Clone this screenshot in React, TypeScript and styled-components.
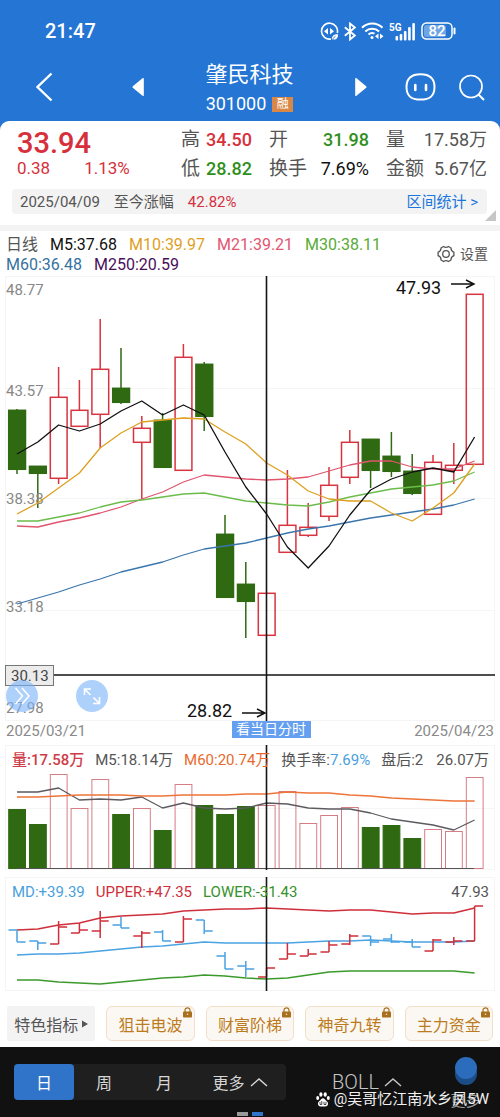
import React from "react";
import styled, { createGlobalStyle } from "styled-components";

const RED = "#d8343f";
const GREEN = "#2f6a12";
const FONT = 'Roboto, "Noto Sans CJK SC", sans-serif';

const GlobalStyle = createGlobalStyle`
  *, *::before, *::after { box-sizing: border-box; }
  body { margin: 0; background: #fff; font-family: ${FONT}; color: #555; }
  button { border: 0; padding: 0; margin: 0; background: none; font: inherit; color: inherit; cursor: pointer; }
  a { color: inherit; text-decoration: none; }
  svg { display: block; }
`;

/* ---------- header ---------- */

const Header = styled.header`
  background: #2475d4;
  color: #fff;
  padding-top: 18px;
`;

const StatusBar = styled.div`
  display: flex;
  align-items: center;
  justify-content: space-between;
  height: 26px;
  padding: 0 43px 0 45px;
`;

const Clock = styled.time`
  font-size: 20px;
  font-weight: 500;
  line-height: 26px;
`;

const StatusIcons = styled.div`
  display: flex;
  align-items: center;
  gap: 5px;
`;

const NavBar = styled.nav`
  display: grid;
  grid-template-columns: 108px 1fr 130px;
  align-items: center;
  padding: 16px 15px 4px 36px;
  height: 77px;
`;

const NavSide = styled.div`
  display: flex;
  align-items: center;
  justify-content: space-between;
  padding-bottom: 4px;
`;

const NavPair = styled.div`
  display: flex;
  align-items: center;
  gap: 23px;
`;

const IconButton = styled.button`
  display: block;
  color: #fff;
`;

const StockTitle = styled.div`
  display: flex;
  flex-direction: column;
  align-items: center;
`;

const StockName = styled.h1`
  margin: 0;
  font-size: 22px;
  font-weight: 400;
  line-height: 30px;
`;

const StockCode = styled.div`
  display: flex;
  align-items: center;
  gap: 6px;
  font-size: 18px;
  line-height: 28px;
`;

const Badge = styled.span`
  width: 21px;
  height: 15px;
  background: #d98747;
  font-size: 12px;
  line-height: 15px;
  text-align: center;
`;

const CardTop = styled.div`
  height: 9px;
  margin-bottom: -9px;
  background: #fff;
  border-radius: 9px 9px 0 0;
`;

/* ---------- quote ---------- */

const Quote = styled.section`
  position: relative;
  padding: 4px 13px 11px 12px;
`;

const QuoteGrid = styled.div`
  display: grid;
  grid-template-columns: 164px 1fr;
  padding: 0 0 2px 5px;
`;

const Price = styled.div`
  font-size: 29px;
  font-weight: 500;
  line-height: 36px;
  color: #d6303c;
`;

const Change = styled.div`
  display: flex;
  gap: 34px;
  font-size: 17px;
  line-height: 14px;
  color: #d6303c;
`;

const Stats = styled.dl`
  display: grid;
  grid-template-columns: 71px 100px 1fr;
  column-gap: 17px;
  margin: 0;
`;

const Stat = styled.div`
  display: flex;
  justify-content: space-between;
  font-size: 19px;
  line-height: 29px;
  white-space: nowrap;

  dt { color: #555; }
`;

const StatValue = styled.dd<{ $color: string; $bold?: boolean }>`
  margin: 0;
  font-size: 18px;
  font-weight: ${(p) => (p.$bold ? 500 : 400)};
  color: ${(p) => p.$color};
`;

const RangeBar = styled.div`
  display: flex;
  align-items: center;
  gap: 14px;
  height: 25px;
  margin-top: 4px;
  padding: 0 9px 0 8px;
  border-radius: 4px;
  background: #f3f3f3;
  font-size: 15px;
  line-height: 24px;

  a { margin-left: auto; color: #1a76dc; }
  strong { font-weight: 400; color: #d6303c; }
`;

const Corner = styled.span`
  position: absolute;
  right: 4px;
  bottom: 4px;
  border-style: solid;
  border-width: 0 0 11px 11px;
  border-color: transparent transparent #c6c6c6 transparent;
`;

const Divider = styled.div`
  height: 6px;
  background: #f3f3f3;
`;

/* ---------- moving average legend ---------- */

const LegendBar = styled.section`
  display: flex;
  align-items: center;
  justify-content: space-between;
  padding: 4px 12px 1px 6px;
`;

const Legend = styled.div`
  display: flex;
  flex-wrap: wrap;
  flex: 1;
  column-gap: 12px;
  font-size: 16px;
  line-height: 20px;
  padding-right: 20px;
`;

const Tint = styled.span<{ $color: string; $bold?: boolean }>`
  color: ${(p) => p.$color};
  font-weight: ${(p) => (p.$bold ? 500 : 400)};
  white-space: nowrap;
`;

const Settings = styled.button`
  display: flex;
  align-items: center;
  gap: 5px;
  padding-bottom: 2px;
  font-size: 14px;
  line-height: 20px;
`;

/* ---------- charts ---------- */

const ChartArea = styled.section`
  position: relative;
  padding: 0 5px;
`;

const Chart = styled.svg`
  width: 100%;
  height: auto;
  font-family: ${FONT};
`;

const FloatButton = styled.button<{ $left: number }>`
  position: absolute;
  left: ${(p) => p.$left}px;
  bottom: 9px;
  width: 32px;
  height: 32px;
  border-radius: 50%;
  background: rgba(120, 179, 250, 0.6);
`;

const DateRow = styled.div`
  display: grid;
  grid-template-columns: 1fr auto 1fr;
  align-items: center;
  height: 20px;
  margin-bottom: 4px;
  padding: 0 6px;
  font-size: 15px;
  line-height: 20px;
  color: #8a8a8a;
`;

const DayLink = styled.button`
  align-self: start;
  height: 17px;
  width: 79px;
  margin-left: 42px;
  background: #65a0f0;
  color: #fff;
  font-size: 14px;
  line-height: 17px;
`;

const DateCell = styled.div`
  &:last-child { text-align: right; }
`;

const Stack = styled.section<{ $gap: number }>`
  display: grid;
  grid-template-columns: minmax(0, 1fr);
  margin: 0 5px ${(p) => p.$gap}px;
  > * { grid-area: 1 / 1; }
`;

const PanelLegend = styled.div`
  display: flex;
  align-items: flex-start;
  gap: 11px;
  padding: 4px 6px 0 7px;
  font-size: 15px;
  line-height: 22px;
  white-space: nowrap;

  > :last-child { margin-left: auto; }
`;

/* ---------- indicators ---------- */

const ChipRow = styled.section`
  display: grid;
  grid-template-columns: repeat(5, 1fr);
  gap: 11px;
  padding: 15px 7px 6px;
`;

const Chip = styled.button<{ $plain?: boolean }>`
  position: relative;
  display: flex;
  align-items: center;
  justify-content: center;
  gap: 4px;
  height: 35px;
  border: 1px solid ${(p) => (p.$plain ? "#f3f3f3" : "#f1dfc8")};
  border-radius: ${(p) => (p.$plain ? 2 : 6)}px;
  background: ${(p) => (p.$plain ? "#f3f3f3" : "#fbf8f3")};
  color: ${(p) => (p.$plain ? "#555" : "#bd7b20")};
  font-size: 16px;
  white-space: nowrap;

  svg.lock { position: absolute; right: 2px; top: 0; }
`;

/* ---------- footer ---------- */

const Footer = styled.footer`
  position: relative;
  display: flex;
  align-items: flex-start;
  height: 70px;
  padding: 17px 11px 0 14px;
  background: #111;
  color: #ddd;
`;

const Tabs = styled.div`
  display: flex;
  height: 36px;
  border-radius: 4px;
  background: #1f1f1f;
`;

const Tab = styled.button<{ $active?: boolean; $wide?: boolean }>`
  display: flex;
  align-items: center;
  justify-content: center;
  gap: 5px;
  width: ${(p) => (p.$wide ? 92 : 60)}px;
  border-radius: 4px;
  background: ${(p) => (p.$active ? "#2f74c9" : "transparent")};
  color: ${(p) => (p.$active ? "#fff" : "#d6d6d6")};
  font-size: 16px;
`;

const Indicator = styled.button`
  display: flex;
  align-items: center;
  gap: 5px;
  height: 36px;
  margin-left: auto;
  color: #c4c4c4;
  font-size: 20px;
  font-weight: 300;
`;

const MoreButton = styled.button`
  display: flex;
  flex-direction: column;
  align-items: center;
  width: 47px;
  margin-left: 40px;
  margin-top: -9px;
  color: #999;
  font-size: 15px;
  line-height: 24px;
`;

const Watermark = styled.div`
  position: absolute;
  right: 11px;
  bottom: 7px;
  display: flex;
  align-items: center;
  gap: 4px;
  color: #f2f2f2;
  font-size: 15px;
  line-height: 22px;
  white-space: nowrap;
`;

const Pager = styled.div`
  position: absolute;
  left: 0;
  right: 0;
  bottom: 1px;
  display: flex;
  justify-content: center;
  gap: 4px;
`;

const PagerMark = styled.i<{ $color: string }>`
  width: 11px;
  height: 4px;
  background: ${(p) => p.$color};
`;

/* ---------- data ---------- */

const STEP = 20.8;
const px = (i: number) => 12 + i * STEP;
const line = (ys: number[]) => ys.map((y, i) => `${px(i).toFixed(1)},${y}`).join(" ");

/* rising?, body top, body bottom, wick top, wick bottom */
const candles: [boolean, number, number, number, number][] = [
  [false, 134, 193, 133, 198], [false, 190, 197, 190, 232], [true, 121, 202, 91, 208],
  [true, 134, 150, 104, 150], [true, 93, 138, 43, 172], [false, 112, 126, 72, 128],
  [true, 152, 166, 140, 223], [false, 144, 191, 137, 192], [true, 81, 194, 68, 194],
  [false, 88, 140, 86, 155], [false, 258, 321, 239, 321], [false, 308, 325, 286, 362],
  [true, 317, 359, 317, 359], [true, 249, 276, 194, 276], [true, 251, 259, 227, 261],
  [true, 209, 240, 191, 245], [true, 166, 201, 154, 208], [false, 163, 194, 163, 212],
  [false, 180, 195, 156, 201], [false, 195, 217, 178, 219], [true, 186, 238, 179, 238],
  [true, 189, 194, 167, 208], [true, 18, 188, 18, 188],
];

const averages = [
  { color: "#3a76ac", ys: [328, 322, 316, 309, 303, 296, 291, 286, 279, 273, 270, 267, 262, 257, 253, 250, 246, 242, 239, 236, 233, 229, 223] },
  { color: "#e0566f", ys: [250, 251, 246, 242, 237, 231, 223, 216, 206, 199, 201, 203, 204, 203, 201, 195, 189, 185, 185, 191, 193, 193, 185] },
  { color: "#6cbc4a", ys: [245, 245, 241, 237, 231, 226, 224, 221, 218, 217, 221, 225, 227, 229, 230, 226, 221, 217, 213, 211, 209, 205, 196] },
  { color: "#dda020", ys: [238, 227, 212, 197, 172, 157, 146, 144, 142, 143, 156, 168, 187, 199, 215, 223, 225, 225, 237, 245, 232, 217, 188] },
  { color: "#111", ys: [178, 166, 149, 155, 148, 135, 125, 139, 129, 139, 176, 211, 238, 271, 292, 270, 239, 214, 203, 196, 192, 196, 161] },
];

const volumes = [64, 79, 29, 63, 34, 69, 63, 85, 39, 60, 69, 61, 60, 46, 78, 70, 62, 82, 80, 93, 84, 86, 32];
const volumeLines = [
  { color: "#5d5a60", ys: [47, 47, 43, 55, 54, 55, 52, 63, 58, 63, 64, 63, 58, 59, 63, 64, 64, 68, 74, 77, 80, 85, 75] },
  { color: "#ee7439", ys: [52, 52, 51, 50, 50, 50, 51, 51, 50, 50, 50, 49, 49, 47, 48, 48, 50, 51, 53, 54, 55, 56, 56] },
];

const bands = [
  { color: "#4aa3e2", ys: [78, 77, 77, 76, 74, 72, 70, 69, 67, 65, 66, 66, 66, 66, 65, 64, 64, 63, 64, 65, 65, 65, 64] },
  { color: "#cf2f3b", ys: [53, 52, 48, 46, 41, 39, 38, 37, 34, 33, 32, 32, 31, 32, 33, 34, 33, 33, 35, 37, 36, 36, 31] },
  { color: "#3c9a2c", ys: [103, 103, 105, 106, 107, 105, 103, 101, 100, 98, 99, 101, 102, 101, 98, 95, 94, 94, 94, 94, 94, 94, 96] },
];

/* high, low, open, close */
const ticks: [number, number, number, number][] = [
  [53, 65, 53, 65], [64, 73, 64, 66], [44, 67, 67, 50], [46, 56, 56, 53], [34, 61, 54, 44], [40, 51, 48, 51],
  [54, 71, 59, 56], [53, 64, 55, 64], [39, 65, 65, 42], [43, 57, 43, 54], [75, 92, 79, 92], [84, 100, 89, 92],
  [91, 100, 100, 91], [66, 82, 82, 77], [72, 79, 79, 77], [64, 75, 75, 68], [57, 68, 67, 59], [59, 69, 59, 65],
  [57, 66, 62, 65], [62, 70, 65, 70], [62, 74, 74, 63], [60, 68, 65, 64], [29, 64, 64, 29],
];

const axis: [string, number][] = [["48.77", 19], ["43.57", 120], ["38.38", 228], ["33.18", 336], ["27.98", 437]];

/* ---------- pieces ---------- */

function Frame({ height, rows }: { height: number; rows: number[] }) {
  return (
    <g stroke="#f5f5f5" fill="none">
      <rect x="0.5" y="0.5" width="489" height={height - 1} />
      {rows.map((y) => <path key={y} d={`M0 ${y}.5H490`} />)}
    </g>
  );
}

function Lines({ items, width = 1.3 }: { items: { color: string; ys: number[] }[]; width?: number }) {
  return (
    <g fill="none" strokeWidth={width} strokeLinejoin="round">
      {items.map((l) => <polyline key={l.color} stroke={l.color} points={line(l.ys)} />)}
    </g>
  );
}

function PriceChart() {
  return (
    <Chart viewBox="0 0 490 445" role="img" aria-label="日线">
      <Frame height={445} rows={[112, 222, 334]} />
      {candles.map(([up, top, bottom, high, low], i) => (
        <g key={i} stroke={up ? RED : GREEN} strokeWidth="1.5" fill={up ? "none" : GREEN}>
          <path d={`M${px(i)} ${high}V${top}M${px(i)} ${bottom}V${low}`} />
          <rect x={px(i) - 8.3} y={top + 0.3} width="16.8" height={bottom - top} />
        </g>
      ))}
      <g fontSize="15" fill="#888">
        {axis.map(([label, y]) => <text key={label} x="1" y={y}>{label}</text>)}
      </g>
      <Lines items={averages} />
      <path d="M49 399H490M261.500 0V445" stroke="#151515" strokeWidth="1.6" />
      <rect x="0.5" y="389.5" width="48" height="20" fill="#ececec" stroke="#777" />
      <text x="6" y="405" fontSize="15" fill="#444">30.13</text>
      <g fontSize="18" fill="#111">
        <text x="391" y="18">47.93</text>
        <text x="182" y="441">28.82</text>
      </g>
      <path d="M446 8h23M461 4l8 4l-8 4M237 437h23M252 433l8 4l-8 4" fill="none" stroke="#111" strokeWidth="1.4" />
    </Chart>
  );
}

function VolumeChart() {
  return (
    <Chart viewBox="0 0 490 125" role="img" aria-label="成交量">
      <Frame height={125} rows={[63]} />
      {volumes.map((top, i) => {
        const up = candles[i][0];
        return (
          <rect key={i} x={px(i) - 8.3} y={top + 0.5} width="16.8" height={123 - top}
            fill={up ? "none" : GREEN} stroke={up ? "#d57d85" : GREEN} strokeWidth="1" />
        );
      })}
      <path d="M12 123.500H469" stroke="#555" />
      <Lines items={volumeLines} />
      <path d="M261.500 0V125" stroke="#151515" strokeWidth="1.6" />
    </Chart>
  );
}

function BandChart() {
  return (
    <Chart viewBox="0 0 490 114" role="img" aria-label="BOLL">
      <Frame height={114} rows={[]} />
      <Lines items={bands} width={1.5} />
      {ticks.map(([high, low, open, close], i) => (
        <path key={i} fill="none" strokeWidth="1.5" stroke={candles[i][0] ? "#cf2f3b" : "#4aa3e2"}
          d={`M${px(i)} ${high}V${low}M${px(i) - 8.5} ${open}H${px(i)}M${px(i)} ${close}h8.500`} />
      ))}
      <path d="M261.500 0V114" stroke="#151515" strokeWidth="1.6" />
    </Chart>
  );
}

const Lock = () => (
  <svg className="lock" width="9" height="11" viewBox="0 0 9 11" aria-hidden="true">
    <path d="M2 5V3a2.500 2.200 0 0 1 5 0v2" fill="none" stroke="#a8701c" strokeWidth="1.2" />
    <rect y="4.500" width="9" height="6" rx="0.800" fill="#a8701c" />
    <circle cx="4.500" cy="7.200" r="0.800" fill="#f4e2c4" />
  </svg>
);

const Caret = () => (
  <svg width="18" height="9" viewBox="0 0 18 9" fill="none" stroke="currentColor" strokeWidth="1.5" aria-hidden="true">
    <path d="M1 8l8-7l8 7" />
  </svg>
);

const Paw = () => (
  <svg width="14" height="15" viewBox="0 0 14 15" fill="#fff" aria-hidden="true">
    <ellipse cx="4.900" cy="2.500" rx="1.600" ry="2.300" />
    <ellipse cx="9.200" cy="2.500" rx="1.600" ry="2.300" />
    <ellipse cx="1.700" cy="6" rx="1.500" ry="2" />
    <ellipse cx="12.300" cy="6" rx="1.500" ry="2" />
    <path d="M7 6.200c1.500 0 2.200 1.600 3.300 2.600s2 1.800 1.700 3.400c-.4 2-2 2.300-5 2.300s-4.600-.3-5-2.300c-.3-1.600.6-2.400 1.700-3.400S5.500 6.200 7 6.200z" />
    <path d="M4 10v2.500h1.800V9M8 9.800v2.700h2V9.800" fill="none" stroke="#222" strokeWidth="0.800" />
  </svg>
);

function StatusGlyphs() {
  return (
    <StatusIcons>
      <svg width="19" height="19" viewBox="0 0 19 19" fill="none" stroke="#fff" strokeWidth="1.600">
        <path d="M11 17a8 8 0 1 1 6.300-6" />
        <path d="M8 6v6.500L4 9.300z" fill="#fff" stroke="none" />
        <path d="M10 6v6.500l4-3.200z" fill="#fff" stroke="none" />
        <path d="M12 17.500c-.5-3.500 2-5.500 6-5.300c.3 4-2 6-4.800 5z" fill="#fff" stroke="none" />
        <path d="M12.500 17l3-2.800" stroke="#2475d4" strokeWidth="0.900" />
      </svg>
      <svg width="12" height="19" viewBox="0 0 12 19" fill="none" stroke="#fff" strokeWidth="1.800">
        <path d="M0.800 5.200l10 8.300L6 17.500V1.500l4.800 4L0.800 13.800" />
      </svg>
      <svg width="23" height="18" viewBox="0 0 23 18" fill="none" stroke="#fff" strokeWidth="2">
        <path d="M1 5.800a14.500 14.500 0 0 1 20.500 0M4.300 9.500a10 10 0 0 1 13.800 0M7.500 12.600a5.500 5.500 0 0 1 6-1" />
        <circle cx="11" cy="15.500" r="1.500" fill="#fff" stroke="none" />
        <path d="M17.500 11.500v5.500L14 14.200zM19 11.500v5.500l3.500-2.800z" fill="#fff" stroke="none" />
      </svg>
      <svg width="27" height="19" viewBox="0 0 27 19" fill="#fff">
        <text x="0" y="9" fontFamily="Roboto, sans-serif" fontSize="10" fontWeight="700">5G</text>
        <rect x="6.500" y="14" width="2.600" height="4.500" rx="1" />
        <rect x="10.700" y="12" width="2.600" height="6.500" rx="1" />
        <rect x="14.900" y="9" width="2.600" height="9.500" rx="1" />
        <rect x="19.100" y="5" width="2.600" height="13.500" rx="1" />
        <rect x="23.300" y="1" width="2.600" height="17.500" rx="1" />
      </svg>
      <svg width="36" height="18" viewBox="0 0 36 18">
        <rect x="1" y="1" width="30" height="16" rx="4.500" fill="none" stroke="#fff" strokeWidth="1.500" />
        <rect x="3" y="3" width="22" height="12" rx="2.500" fill="#fff" fillOpacity="0.350" />
        <path d="M33.500 6.500v5" stroke="#fff" strokeWidth="2" strokeLinecap="round" />
        <text x="16" y="14" textAnchor="middle" fontFamily="Roboto, sans-serif" fontSize="15" fontWeight="500" fill="#fff">82</text>
      </svg>
    </StatusIcons>
  );
}

const stats: { label: string; value: string; color: string; bold?: boolean }[] = [
  { label: "高", value: "34.50", color: "#d6303c", bold: true },
  { label: "开", value: "31.98", color: "#2f8f1c", bold: true },
  { label: "量", value: "17.58万", color: "#555" },
  { label: "低", value: "28.82", color: "#2f8f1c", bold: true },
  { label: "换手", value: "7.69%", color: "#111" },
  { label: "金额", value: "5.67亿", color: "#555" },
];

export default function App() {
  return (
    <>
      <GlobalStyle />
      <Header>
        <StatusBar>
          <Clock>21:47</Clock>
          <StatusGlyphs />
        </StatusBar>
        <NavBar>
          <NavSide>
            <IconButton aria-label="返回">
              <svg width="17" height="30" viewBox="0 0 17 30" fill="none" stroke="currentColor" strokeWidth="2.400">
                <path d="M15.500 1.500L1.500 15l14 13.500" />
              </svg>
            </IconButton>
            <IconButton aria-label="上一只">
              <svg width="12" height="20" viewBox="0 0 12 20" fill="currentColor">
                <path d="M10.500 1.200c.8-.6 1.300-.3 1.300.6v16.400c0 .9-.5 1.200-1.300.6L.800 10.800q-.8-.8 0-1.600z" />
              </svg>
            </IconButton>
          </NavSide>
          <StockTitle>
            <StockName>肇民科技</StockName>
            <StockCode>301000<Badge>融</Badge></StockCode>
          </StockTitle>
          <NavSide>
            <IconButton aria-label="下一只">
              <svg width="12" height="20" viewBox="0 0 12 20" fill="currentColor">
                <path d="M1.500 1.200C.7.600.2.900.2 1.800v16.400c0 .9.500 1.200 1.300.6l9.700-8q.8-.8 0-1.600z" />
              </svg>
            </IconButton>
            <NavPair>
              <IconButton aria-label="助手">
                <svg width="31" height="28" viewBox="0 0 31 28" fill="none" stroke="currentColor" strokeWidth="2">
                  <path d="M15.500 1.200C25 1.200 29.500 5 29.500 14S25 26.600 15.500 26.600S1.500 23 1.500 14S6 1.200 15.500 1.200z" />
                  <path d="M10.300 12v5M21 12v5" strokeWidth="2.600" strokeLinecap="round" />
                </svg>
              </IconButton>
              <IconButton aria-label="搜索">
                <svg width="26" height="27" viewBox="0 0 26 27" fill="none" stroke="currentColor" strokeWidth="1.700">
                  <circle cx="12" cy="12.500" r="11" />
                  <path d="M19.500 20.500l5.500 5.500" strokeWidth="2" />
                </svg>
              </IconButton>
            </NavPair>
          </NavSide>
        </NavBar>
        <CardTop />
      </Header>

      <Quote>
        <QuoteGrid>
          <div>
            <Price>33.94</Price>
            <Change><span>0.38</span><span>1.13%</span></Change>
          </div>
          <Stats>
            {stats.map((s) => (
              <Stat key={s.label}>
                <dt>{s.label}</dt>
                <StatValue $color={s.color} $bold={s.bold}>{s.value}</StatValue>
              </Stat>
            ))}
          </Stats>
        </QuoteGrid>
        <RangeBar>
          <time>2025/04/09</time>
          <span>至今涨幅</span>
          <strong>42.82%</strong>
          <a href="#range">区间统计 &gt;</a>
        </RangeBar>
        <Corner />
      </Quote>
      <Divider />

      <LegendBar>
        <Legend>
          <Tint $color="#555">日线</Tint>
          <Tint $color="#111">M5:37.68</Tint>
          <Tint $color="#dfa01f">M10:39.97</Tint>
          <Tint $color="#e2566f">M21:39.21</Tint>
          <Tint $color="#58ab35">M30:38.11</Tint>
          <Tint $color="#35729f">M60:36.48</Tint>
          <Tint $color="#4a0f5c">M250:20.59</Tint>
        </Legend>
        <Settings>
          <svg width="18" height="18" viewBox="0 0 18 18" fill="none" stroke="#555" strokeWidth="1.300">
            <path d="M6.500 1.500Q9 3.200 11.500 1.500L14 3q-.2 3 2.900 4.300v3.400Q13.800 12 14 15l-2.500 1.500q-2.500-1.700-5 0L4 15q.2-3-2.900-4.300V7.300Q4.200 6 4 3z" />
            <circle cx="9" cy="9" r="3.300" />
          </svg>
          设置
        </Settings>
      </LegendBar>

      <ChartArea>
        <PriceChart />
        <FloatButton $left={6} aria-label="展开">
          <svg width="32" height="32" viewBox="0 0 32 32" fill="none" stroke="#fff" strokeWidth="1.500">
            <path d="M9.500 8l7 8l-7 8M16 8l7 8l-7 8" />
          </svg>
        </FloatButton>
        <FloatButton $left={76} aria-label="全屏">
          <svg width="32" height="32" viewBox="0 0 32 32" fill="none" stroke="#fff" strokeWidth="1.600">
            <path d="M15 9H8.500v6M8.500 9l6 6M23.500 17v6.500H17M23.500 23.500l-6-6" />
          </svg>
        </FloatButton>
      </ChartArea>
      <DateRow>
        <DateCell>2025/03/21</DateCell>
        <DayLink>看当日分时</DayLink>
        <DateCell>2025/04/23</DateCell>
      </DateRow>

      <Stack $gap={7}>
        <VolumeChart />
        <PanelLegend>
          <Tint $color="#cf3c49" $bold>量:17.58万</Tint>
          <Tint $color="#555">M5:18.14万</Tint>
          <Tint $color="#e9692d">M60:20.74万</Tint>
          <Tint $color="#555">换手率:<Tint $color="#4a9fdc">7.69%</Tint></Tint>
          <Tint $color="#555">盘后:2</Tint>
          <Tint $color="#555">26.07万</Tint>
        </PanelLegend>
      </Stack>
      <Stack $gap={0}>
        <BandChart />
        <PanelLegend>
          <Tint $color="#4a9fdc">MD:+39.39</Tint>
          <Tint $color="#cf2f3b">UPPER:+47.35</Tint>
          <Tint $color="#35922a">LOWER:-31.43</Tint>
          <Tint $color="#555">47.93</Tint>
        </PanelLegend>
      </Stack>

      <ChipRow>
        <Chip $plain>
          特色指标
          <svg width="6" height="8" viewBox="0 0 6 8" fill="#555"><path d="M0 0.500L6 4L0 7.500z" /></svg>
        </Chip>
        {["狙击电波", "财富阶梯", "神奇九转", "主力资金"].map((name) => (
          <Chip key={name}>{name}<Lock /></Chip>
        ))}
      </ChipRow>

      <Footer>
        <Tabs>
          <Tab $active>日</Tab>
          <Tab>周</Tab>
          <Tab>月</Tab>
          <Tab $wide>更多<Caret /></Tab>
        </Tabs>
        <Indicator>BOLL<Caret /></Indicator>
        <MoreButton>
          <svg width="24" height="34" viewBox="0 0 24 34">
            <circle cx="12" cy="19" r="11" fill="#1d4d86" />
            <circle cx="12" cy="13" r="11" fill="#2b6cbd" />
          </svg>
          更多
        </MoreButton>
        <Watermark><Paw />@吴哥忆江南水乡凤5W</Watermark>
        <Pager>
          <PagerMark $color="#999" />
          <PagerMark $color="#2f74c9" />
        </Pager>
      </Footer>
    </>
  );
}
